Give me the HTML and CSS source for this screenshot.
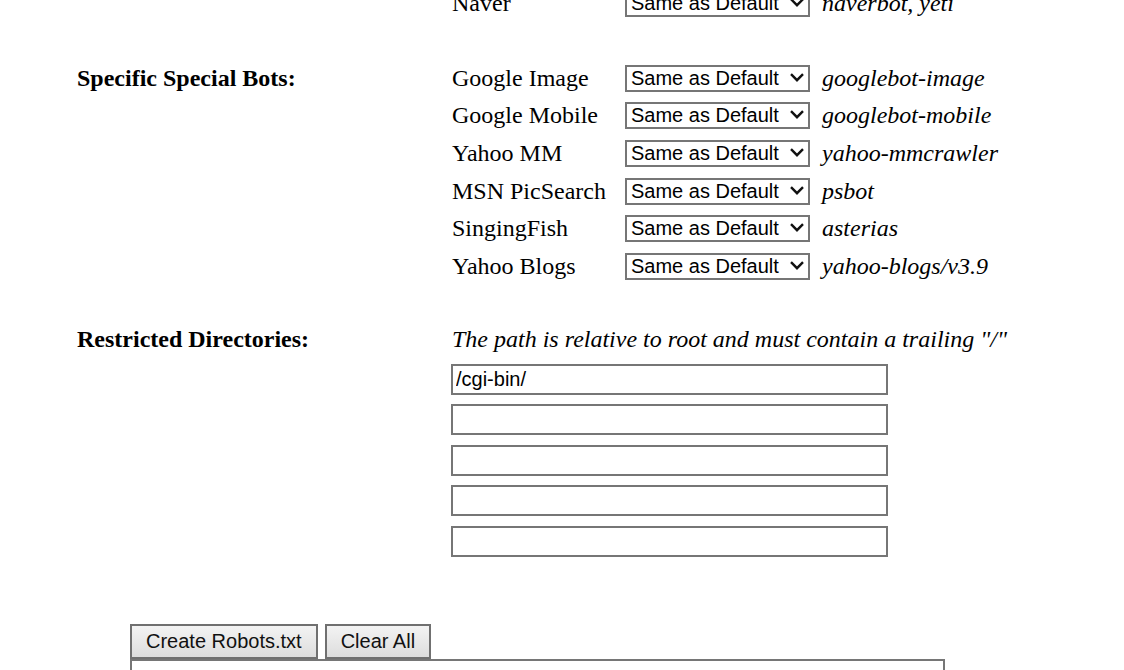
FILE: index.html
```html
<!DOCTYPE html>
<html>
<head>
<meta charset="utf-8">
<title>Robots.txt Generator</title>
<link rel="stylesheet" href="styles.css">
</head>
<body>
<div class="form">
  <section class="group first">
    <div class="label"></div>
    <div class="bots">
      <div class="bot"><span class="name">Naver</span><span class="pick"><select class="choice"><option>Same as Default</option><option>Allowed</option><option>Refused</option></select><svg class="chev" viewBox="0 0 14 9" width="14" height="9"><path d="M1 1.2 L7 7.2 L13 1.2" fill="none" stroke="#111" stroke-width="2.4"/></svg></span><span class="ua">naverbot, yeti</span></div>
    </div>
  </section>

  <section class="group">
    <div class="label">Specific Special Bots:</div>
    <div class="bots">
      <div class="bot"><span class="name">Google Image</span><span class="pick"><select class="choice"><option>Same as Default</option><option>Allowed</option><option>Refused</option></select><svg class="chev" viewBox="0 0 14 9" width="14" height="9"><path d="M1 1.2 L7 7.2 L13 1.2" fill="none" stroke="#111" stroke-width="2.4"/></svg></span><span class="ua">googlebot-image</span></div>
      <div class="bot"><span class="name">Google Mobile</span><span class="pick"><select class="choice"><option>Same as Default</option><option>Allowed</option><option>Refused</option></select><svg class="chev" viewBox="0 0 14 9" width="14" height="9"><path d="M1 1.2 L7 7.2 L13 1.2" fill="none" stroke="#111" stroke-width="2.4"/></svg></span><span class="ua">googlebot-mobile</span></div>
      <div class="bot"><span class="name">Yahoo MM</span><span class="pick"><select class="choice"><option>Same as Default</option><option>Allowed</option><option>Refused</option></select><svg class="chev" viewBox="0 0 14 9" width="14" height="9"><path d="M1 1.2 L7 7.2 L13 1.2" fill="none" stroke="#111" stroke-width="2.4"/></svg></span><span class="ua">yahoo-mmcrawler</span></div>
      <div class="bot"><span class="name">MSN PicSearch</span><span class="pick"><select class="choice"><option>Same as Default</option><option>Allowed</option><option>Refused</option></select><svg class="chev" viewBox="0 0 14 9" width="14" height="9"><path d="M1 1.2 L7 7.2 L13 1.2" fill="none" stroke="#111" stroke-width="2.4"/></svg></span><span class="ua">psbot</span></div>
      <div class="bot"><span class="name">SingingFish</span><span class="pick"><select class="choice"><option>Same as Default</option><option>Allowed</option><option>Refused</option></select><svg class="chev" viewBox="0 0 14 9" width="14" height="9"><path d="M1 1.2 L7 7.2 L13 1.2" fill="none" stroke="#111" stroke-width="2.4"/></svg></span><span class="ua">asterias</span></div>
      <div class="bot"><span class="name">Yahoo Blogs</span><span class="pick"><select class="choice"><option>Same as Default</option><option>Allowed</option><option>Refused</option></select><svg class="chev" viewBox="0 0 14 9" width="14" height="9"><path d="M1 1.2 L7 7.2 L13 1.2" fill="none" stroke="#111" stroke-width="2.4"/></svg></span><span class="ua">yahoo-blogs/v3.9</span></div>
    </div>
  </section>

  <section class="group">
    <div class="label">Restricted Directories:</div>
    <div class="dirs">
      <div class="note">The path is relative to root and must contain a trailing "/"</div>
      <input class="dir" type="text" value="/cgi-bin/">
      <input class="dir" type="text" value="">
      <input class="dir" type="text" value="">
      <input class="dir" type="text" value="">
      <input class="dir" type="text" value="">
    </div>
  </section>

  <div class="actions">
    <button class="btn" type="button">Create Robots.txt</button>
    <button class="btn" type="button">Clear All</button>
  </div>
  <textarea class="output"></textarea>
</div>
</body>
</html>
```

FILE: styles.css
```css
html, body {
  margin: 0;
  padding: 0;
  background: #ffffff;
  overflow: hidden;
}

body {
  font-family: "Liberation Serif", "Times New Roman", serif;
  font-size: 24px;
  color: #000000;
}

.form {
  margin-top: -15.5px;
  padding-left: 77px;
}

.group {
  display: grid;
  grid-template-columns: 375px 1fr;
  margin-bottom: 37.7px;
}

.group.first {
  margin-bottom: 37px;
}

.label {
  height: 37.7px;
  display: flex;
  align-items: center;
  font-weight: bold;
}

.bot {
  display: grid;
  grid-template-columns: 173px 185px auto;
  align-items: center;
  height: 37.7px;
}

.pick {
  position: relative;
  display: block;
  width: 185px;
  height: 27px;
}

.choice {
  -webkit-appearance: none;
  appearance: none;
  display: block;
  width: 185px;
  height: 27px;
  box-sizing: border-box;
  border: 2px solid #767676;
  border-radius: 0;
  background: #ffffff;
  color: #000000;
  font-family: "Liberation Sans", Arial, sans-serif;
  font-size: 20px;
  line-height: 23px;
  padding: 0 0 0 4px;
  margin: 0;
}

.chev {
  position: absolute;
  left: 165px;
  top: 8px;
  pointer-events: none;
}

.ua {
  font-style: italic;
  margin-left: 12px;
}

.dirs {
  display: flex;
  flex-direction: column;
  align-items: flex-start;
  margin-left: -1px;
}

.note {
  height: 37.7px;
  display: flex;
  align-items: center;
  font-style: italic;
  margin-left: 1px;
}

.dir {
  width: 437px;
  height: 31px;
  box-sizing: border-box;
  border: 2px solid #767676;
  border-radius: 0;
  margin: 0 0 9.5px 0;
  padding: 0 3px;
  font-family: "Liberation Sans", Arial, sans-serif;
  font-size: 20px;
  color: #000000;
  background: #ffffff;
  outline: none;
}

.group:last-of-type {
  margin-bottom: 0;
}

.group:last-of-type .label,
.group:last-of-type .note {
  position: relative;
  top: -2px;
}

.dirs .note + .dir {
  margin-top: 3px;
}

.actions {
  display: flex;
  gap: 7px;
  margin-top: 58px;
  margin-left: 53px;
}

.btn {
  height: 35px;
  box-sizing: border-box;
  padding: 0 14px;
  border: 2px solid #707070;
  border-radius: 0;
  background: linear-gradient(#f3f3f3, #dddddd);
  font-family: "Liberation Sans", Arial, sans-serif;
  font-size: 20px;
  color: #111111;
  margin: 0;
}

.output {
  display: block;
  margin: 0 0 0 53px;
  width: 815px;
  height: 200px;
  box-sizing: border-box;
  border: 2px solid #767676;
  border-radius: 0;
  resize: none;
  overflow-y: scroll;
  background: #ffffff;
}

.output::-webkit-scrollbar {
  width: 25px;
  background: #f8f8f8;
}
```
